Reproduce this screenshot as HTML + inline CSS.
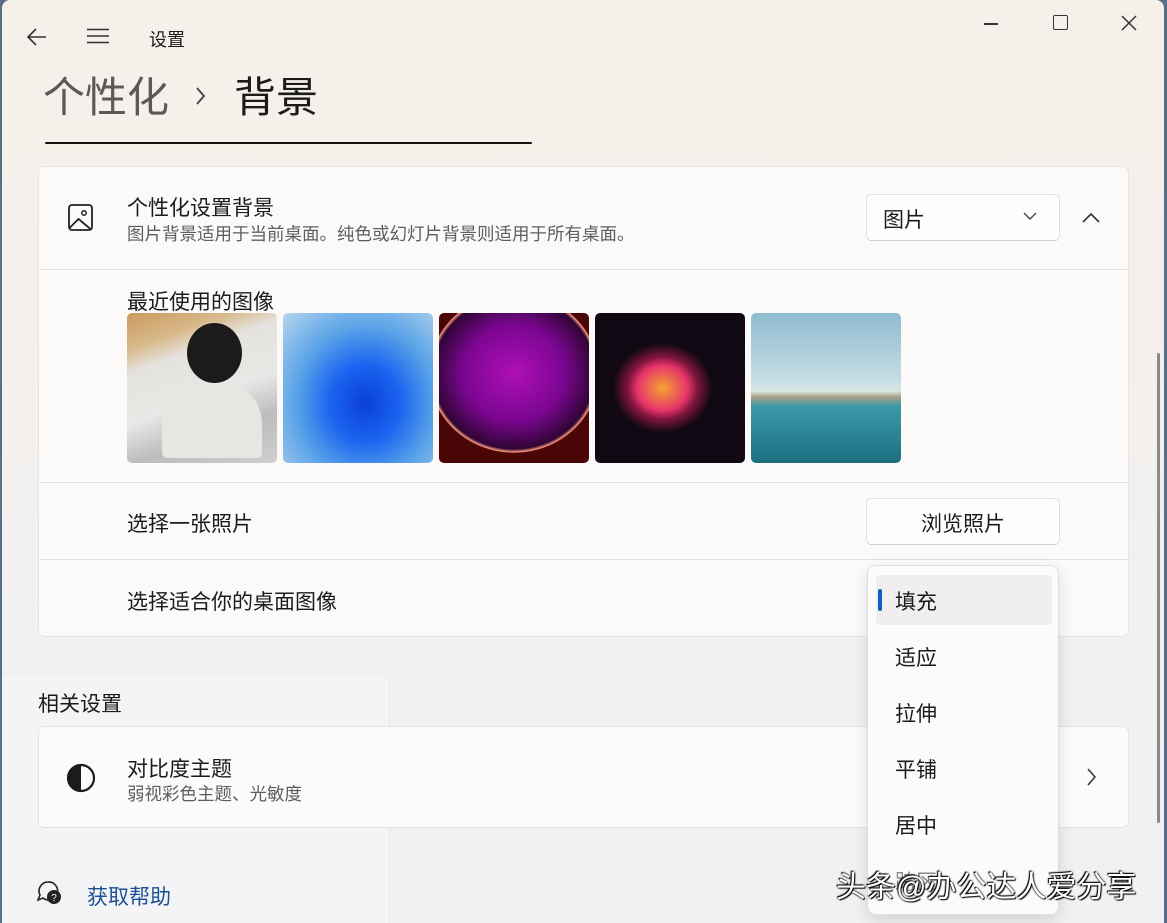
<!DOCTYPE html>
<html><head><meta charset="utf-8"><style>
*{margin:0;padding:0;box-sizing:border-box}
body{width:1167px;height:923px;overflow:hidden;background:#5a6f86;font-family:"Liberation Sans","Noto Sans CJK SC",sans-serif;color:#1b1b1b;position:relative}
.win{position:absolute;left:2px;top:0px;width:1162px;height:923px;border-radius:8px 8px 0 0;background:linear-gradient(180deg,#f6f0ea 0px,#f4efeb 300px,#f1f1f2 650px,#f0f1f3 923px);overflow:hidden}
.abs{position:absolute}
.card{position:absolute;background:#fbfaf9;border:1px solid #e6e3e0;border-radius:6px}
.sep{position:absolute;left:38px;width:1090px;height:1px;background:#e3e0dd}
.btn{position:absolute;background:#fefefe;border:1px solid #e2e0de;border-bottom-color:#cfcdcb;border-radius:5px}
.t15{font-size:21px}
.sub{font-size:17.5px;color:#5e5e5e}
.thumb{position:absolute;top:313px;width:150px;height:150px;border-radius:5px}
.menu{position:absolute;left:865px;top:565px;width:192px;height:350px;background:#fbfbfb;border:1px solid #e0dedd;border-radius:8px;box-shadow:0 6px 16px rgba(0,0,0,.12)}
.mi{position:absolute;left:27px;font-size:21px}
</style></head><body>
<div class="win">
<svg class="abs" style="left:24px;top:27px" width="22" height="20" viewBox="0 0 22 20"><path d="M20 10H3M10 2L2 10l8 8" fill="none" stroke="#333" stroke-width="1.6"/></svg>
<svg class="abs" style="left:85px;top:28px" width="22" height="16"><path d="M0 1.5h22M0 8h22M0 14.5h22" stroke="#333" stroke-width="1.6"/></svg>
<div class="abs" style="left:147px;top:26px;font-size:18px">设置</div>
<div class="abs" style="left:982px;top:23px;width:14px;height:1.5px;background:#333"></div>
<div class="abs" style="left:1051px;top:15px;width:15px;height:15px;border:1.5px solid #333;border-radius:2px"></div>
<svg class="abs" style="left:1119px;top:15px" width="16" height="16"><path d="M1 1l14 14M15 1L1 15" stroke="#333" stroke-width="1.5"/></svg>
<div class="abs" style="left:41px;top:70px;font-size:42px;color:#5a5a5a;line-height:56px">个性化</div>
<svg class="abs" style="left:193px;top:86px" width="12" height="20"><path d="M2 2l7 8-7 8" fill="none" stroke="#444" stroke-width="1.8"/></svg>
<div class="abs" style="left:232px;top:70px;font-size:42px;color:#1b1b1b;line-height:56px">背景</div>
<div class="abs" style="left:43px;top:142px;width:487px;height:2px;background:#111;border-radius:1px"></div>
<div class="card" style="left:36px;top:166px;width:1091px;height:471px"></div>
<svg class="abs" style="left:65px;top:203px" width="28" height="28" viewBox="0 0 28 28"><rect x="2" y="2" width="23" height="25" rx="3" fill="none" stroke="#222" stroke-width="1.8"/><circle cx="17" cy="10" r="2.2" fill="none" stroke="#222" stroke-width="1.5"/><path d="M2.5 25l9-9 12 10" fill="none" stroke="#222" stroke-width="1.8"/></svg>
<div class="abs t15" style="left:125px;top:192px">个性化设置背景</div>
<div class="abs sub" style="left:125px;top:221px">图片背景适用于当前桌面。纯色或幻灯片背景则适用于所有桌面。</div>
<div class="btn" style="left:864px;top:194px;width:194px;height:47px"></div>
<div class="abs t15" style="left:881px;top:204px">图片</div>
<svg class="abs" style="left:1021px;top:212px" width="14" height="9"><path d="M1 1l6 6 6-6" fill="none" stroke="#444" stroke-width="1.4"/></svg>
<svg class="abs" style="left:1080px;top:212px" width="18" height="11"><path d="M1 10l8-8 8 8" fill="none" stroke="#333" stroke-width="1.6"/></svg>
<div class="sep" style="top:269px"></div>
<div class="abs t15" style="left:125px;top:286px">最近使用的图像</div>
<div class="thumb" style="left:125px;background:linear-gradient(160deg,#c99a5b 0,#d8b88a 18%,#e4e2de 30%,#e9e8e6 55%,#bdbcbb 75%,#cfcfcf 100%)"><div style="position:absolute;left:60px;top:10px;width:55px;height:60px;border-radius:50%;background:#1c1a1a"></div><div style="position:absolute;left:35px;top:70px;width:100px;height:75px;border-radius:40px 40px 5px 5px;background:#e7e6e3"></div></div>
<div class="thumb" style="left:281px;background:radial-gradient(ellipse at 55% 60%,#0a3fd8 0,#1b64f0 30%,#5aa3e8 60%,#b7d6ec 100%)"></div>
<div class="thumb" style="left:437px;background:radial-gradient(ellipse 85px 80px at 50% 40%,#b00fb8 0,#7a0690 60%,#300534 95%,#ff9a80 99%,#4a0606 100%),#250624"></div>
<div class="thumb" style="left:593px;background:radial-gradient(ellipse 50px 45px at 45% 50%,#f5a530 0,#e8356a 50%,rgba(200,30,90,.6) 70%,transparent 100%),#100812"></div>
<div class="thumb" style="left:749px;background:linear-gradient(180deg,#8fbcd0 0,#c5dde3 45%,#d8e6e3 52%,#a9a083 56%,#3a9aa8 62%,#1d6f80 100%)"></div>
<div class="sep" style="top:482px"></div>
<div class="abs t15" style="left:125px;top:508px">选择一张照片</div>
<div class="btn" style="left:864px;top:498px;width:194px;height:47px"></div>
<div class="abs t15" style="left:919px;top:508px">浏览照片</div>
<div class="sep" style="top:559px"></div>
<div class="abs t15" style="left:125px;top:586px">选择适合你的桌面图像</div>
<div class="abs" style="left:0;top:677px;width:388px;height:246px;background:rgba(255,255,255,.25);border-right:1px solid #e8e8e8;border-top-right-radius:6px"></div>
<div class="abs t15" style="left:36px;top:688px">相关设置</div>
<div class="card" style="left:36px;top:726px;width:1091px;height:102px;background:#fbfbfb;border-color:#e3e3e3"></div>
<svg class="abs" style="left:63px;top:762px" width="32" height="32"><circle cx="16" cy="16" r="13" fill="none" stroke="#1b1b1b" stroke-width="2.2"/><path d="M16 3a13 13 0 0 0 0 26z" fill="#1b1b1b"/></svg>
<div class="abs t15" style="left:125px;top:753px">对比度主题</div>
<div class="abs sub" style="left:125px;top:781px">弱视彩色主题、光敏度</div>
<svg class="abs" style="left:1085px;top:768px" width="10" height="18"><path d="M1 1l7 8-7 8" fill="none" stroke="#333" stroke-width="1.5"/></svg>
<svg class="abs" style="left:34px;top:880px" width="26" height="26"><path d="M12 2a9 9 0 0 0-8 13l-2 5 5-2a9 9 0 1 0 5-16z" fill="none" stroke="#222" stroke-width="1.6"/><circle cx="18" cy="17" r="7" fill="#222"/><text x="18" y="21" font-size="10" fill="#fff" text-anchor="middle" font-family="Liberation Sans">?</text></svg>
<div class="abs t15" style="left:85px;top:881px;color:#1a4f94">获取帮助</div>
<div class="abs" style="left:1155px;top:353px;width:3px;height:470px;background:#8a8a8a;border-radius:2px"></div>
<div class="menu">
<div style="position:absolute;left:8px;top:9px;width:176px;height:50px;background:#f0efee;border-radius:5px"></div>
<div style="position:absolute;left:10px;top:23px;width:4px;height:22px;background:#0a5fc4;border-radius:2px"></div>
<div class="mi" style="top:20px">填充</div>
<div class="mi" style="top:76px">适应</div>
<div class="mi" style="top:132px">拉伸</div>
<div class="mi" style="top:188px">平铺</div>
<div class="mi" style="top:244px">居中</div>
<div class="mi" style="top:300px;color:#888">跨区</div>
</div>
<div class="abs" style="left:834px;top:862px;font-size:30px;color:#fff;text-shadow:0 0 2px #000,1px 1px 1px #000,-1px -1px 1px #000">头条@办公达人爱分享</div>
</div>
</body></html>
